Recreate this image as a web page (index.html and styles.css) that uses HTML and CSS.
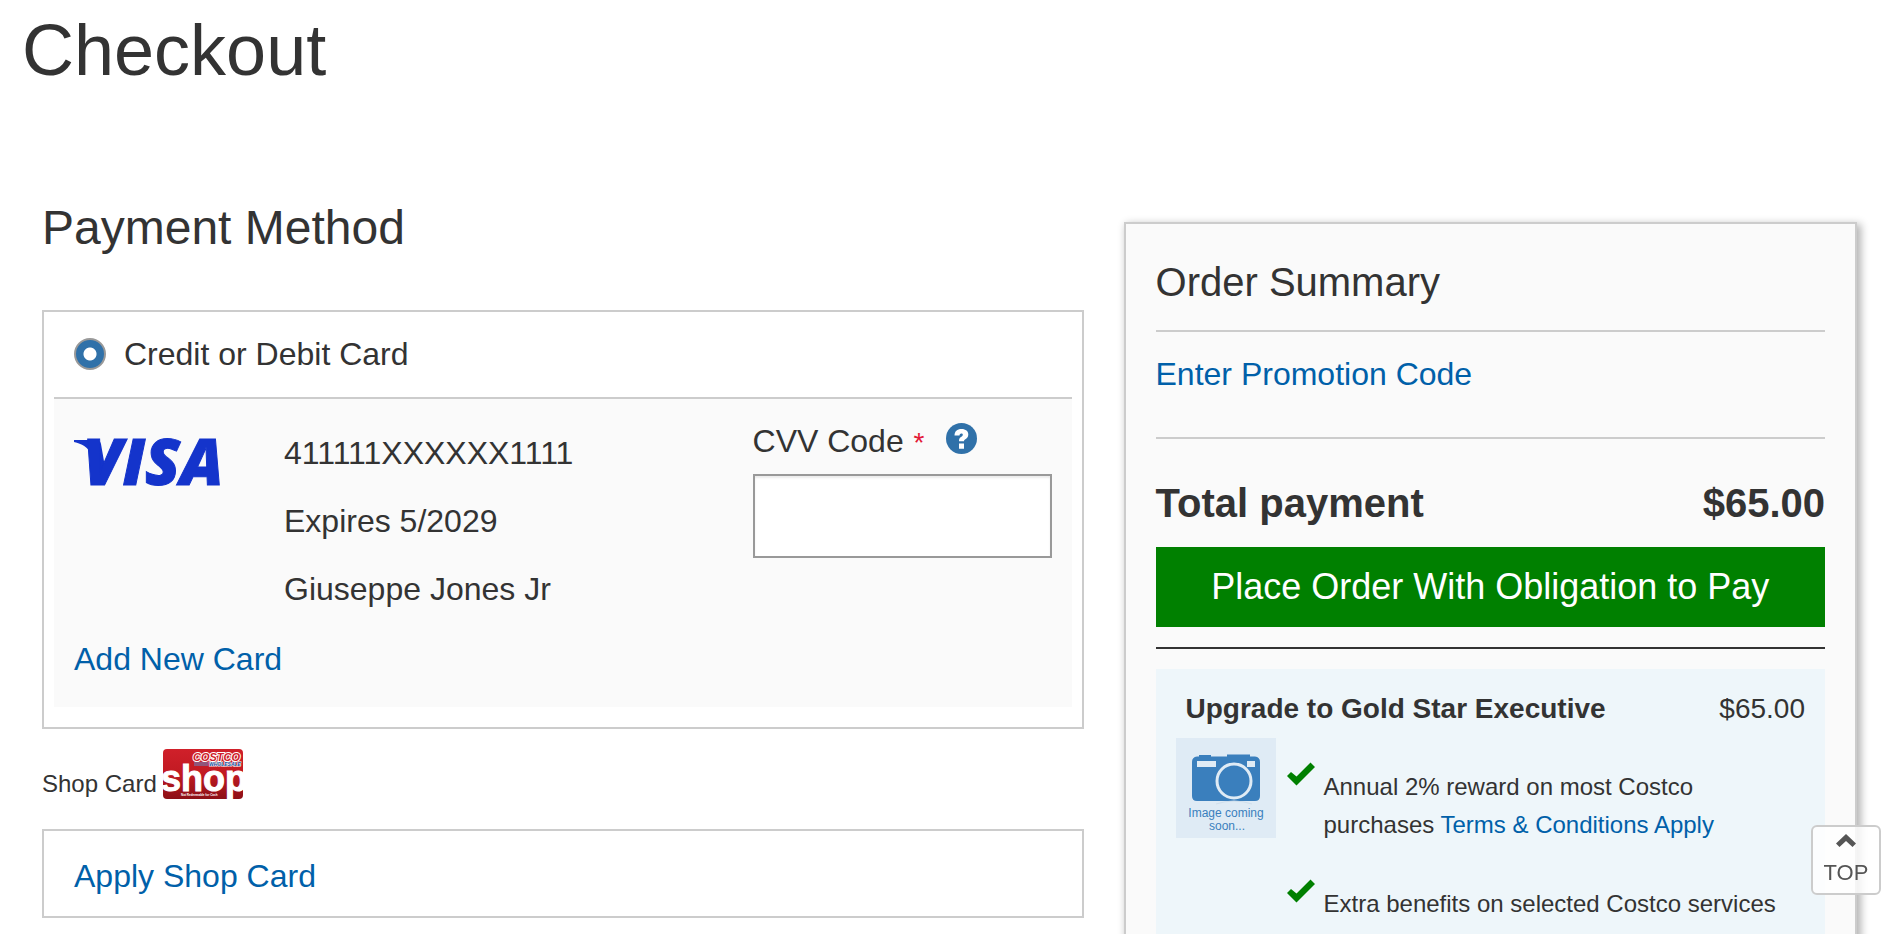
FILE: index.html
```html
<!DOCTYPE html>
<html lang="en">
<head>
    <meta charset="UTF-8">
    <meta name="viewport" content="width=device-width, initial-scale=1.0">
    <title>Checkout</title>
    <link rel="stylesheet" href="styles.css">
</head>
<body>
    <h1 class="page-title">Checkout</h1>

    <div class="checkout">
        <main class="payment">
            <h2 class="section-title">Payment Method</h2>

            <section class="box card-box">
                <div class="card-header">
                    <input type="radio" class="radio" id="payCard" name="payMethod" checked>
                    <label for="payCard">Credit or Debit Card</label>
                </div>
                <div class="card-body">
                    <div class="card-row">
                        <svg class="visa-logo" viewBox="0 0 146 48" role="img" aria-label="Visa">
                            <path d="M0 1H22Q26 1 27 5L31 28L23 42L16 14C14 8 8 5 0 3Z"/>
                            <text x="9" y="46">VISA</text>
                        </svg>
                        <div class="card-info">
                            <p>411111XXXXXX1111</p>
                            <p>Expires 5/2029</p>
                            <p>Giuseppe Jones Jr</p>
                        </div>
                        <div class="cvv">
                            <div class="cvv-label">
                                <label for="cvv">CVV Code <span class="required">*</span></label>
                                <button type="button" class="help-btn" aria-label="Help">
                                    <svg viewBox="0 0 31 31">
                                        <circle cx="15.5" cy="15.5" r="15.5"/>
                                        <path d="M8.5 12.5C8.7 8.3 11 6 15.5 6C19.8 6 22.3 8.3 22.3 11.5C22.3 14 20.8 15.3 19.4 16.2C18.2 17 18 17.3 18 18.3H13C12.9 16 13.6 14.8 15.4 13.7C16.4 13 16.8 12.6 16.8 11.8C16.8 10.9 16.3 10.4 15.4 10.4C14.2 10.4 13.6 11.1 13.5 12.5ZM13 20.5H18V25.8H13Z" fill="#fff"/>
                                    </svg>
                                </button>
                            </div>
                            <input type="text" class="cvv-input" id="cvv">
                        </div>
                    </div>
                    <a href="#" class="add-card">Add New Card</a>
                </div>
            </section>

            <div class="shop-card">
                <span>Shop Card</span>
                <svg class="shop-logo" viewBox="0 0 80 50" role="img" aria-label="Costco Shop Card">
                    <defs>
                        <linearGradient id="shopRed" x1="0" y1="0" x2="0" y2="1">
                            <stop offset="0" stop-color="#d0202a"/>
                            <stop offset="0.5" stop-color="#c11a22"/>
                            <stop offset="1" stop-color="#8c1016"/>
                        </linearGradient>
                        <clipPath id="shopClip"><rect width="80" height="50" rx="4"/></clipPath>
                    </defs>
                    <g clip-path="url(#shopClip)">
                        <rect width="80" height="50" fill="url(#shopRed)"/>
                        <text class="shop-brand" x="30" y="12">COSTCO</text>
                        <path d="M31 14H45M31 16H45" stroke="#5b8fd0" stroke-width="1"/>
                        <text class="shop-sub" x="46" y="17">WHOLESALE</text>
                        <text class="shop-word" x="-2" y="42">shop</text>
                        <text class="shop-note" x="18" y="47">Not Redeemable for Cash</text>
                    </g>
                </svg>
            </div>

            <section class="box apply-box">
                <a href="#">Apply Shop Card</a>
            </section>
        </main>

        <aside class="summary">
            <h2 class="summary-title">Order Summary</h2>
            <div class="promo">
                <a href="#">Enter Promotion Code</a>
            </div>
            <div class="total">
                <span>Total payment</span>
                <span>$65.00</span>
            </div>
            <button type="button" class="place-order">Place Order With Obligation to Pay</button>
            <hr class="divider">

            <section class="upgrade">
                <div class="upgrade-head">
                    <h3>Upgrade to Gold Star Executive</h3>
                    <span>$65.00</span>
                </div>
                <div class="upgrade-body">
                    <svg class="no-image" viewBox="0 0 100 100" role="img" aria-label="Image coming soon">
                        <rect width="100" height="100" fill="#dfebf5"/>
                        <path d="M23 17H35V18.500H51V16.500H74V18.500H79Q84 19 84 24V58Q84 63 79 63H21Q16 63 16 58V24Q16 19 21 18.500H23Z" fill="#3a7fbd"/>
                        <path d="M21 23H40V29H21ZM71 23H79V29H71Z" fill="#dfebf5"/>
                        <circle cx="58" cy="43" r="17" fill="#3a7fbd" stroke="#dfebf5" stroke-width="3"/>
                        <path d="M40 66Q58 60 76 66" fill="none" stroke="#d0dfec" stroke-width="1"/>
                        <text x="50" y="79">Image coming</text>
                        <text x="51" y="92">soon...</text>
                    </svg>
                    <ul class="benefits">
                        <li>
                            <svg class="check" viewBox="0 0 28 24"><path d="M4 10L0 14L9.500 23.500L28 5L23.500 0.500L9.500 14.500Z"/></svg>
                            <p>Annual 2% reward on most Costco purchases <a href="#">Terms &amp; Conditions Apply</a></p>
                        </li>
                        <li>
                            <svg class="check" viewBox="0 0 28 24"><path d="M4 10L0 14L9.500 23.500L28 5L23.500 0.500L9.500 14.500Z"/></svg>
                            <p>Extra benefits on selected Costco services</p>
                        </li>
                    </ul>
                </div>
            </section>
        </aside>
    </div>

    <button type="button" class="top-btn">
        <svg viewBox="0 0 20 14"><path d="M0 9.500L10 0L20 9.500L16.500 13L10 7L3.500 13Z"/></svg>
        TOP
    </button>
</body>
</html>
```
FILE: styles.css
```css
* {
    margin: 0;
    padding: 0;
    box-sizing: border-box;
}

body {
    font-family: Arial, "Liberation Sans", Helvetica, sans-serif;
    font-size: 32px;
    line-height: 40px;
    color: #333;
    background: #fff;
    padding-top: 10px;
}

a {
    color: #0060a9;
    text-decoration: none;
}

a:hover {
    text-decoration: underline;
}

h1,
h2,
h3 {
    font-weight: normal;
}

button,
input {
    font-family: inherit;
}

.page-title {
    font-size: 72px;
    line-height: 80px;
    padding: 0 22px;
}

.checkout {
    display: grid;
    grid-template-columns: minmax(0, 71fr) minmax(0, 50fr);
    align-items: start;
    gap: 40px;
    padding: 0 44px 0 42px;
    margin-top: 108px;
}

/* Payment column */
.section-title {
    font-size: 48px;
    line-height: 60px;
    margin-bottom: 52px;
}

.box {
    border: 2px solid #ccc;
}

.card-box {
    padding: 0 10px 20px;
}

.card-header {
    display: flex;
    align-items: center;
    gap: 18px;
    height: 87px;
    padding: 0 0 2px 20px;
    border-bottom: 2px solid #ccc;
}

.radio {
    appearance: none;
    width: 32px;
    height: 32px;
    border: 2px solid #999;
    border-radius: 50%;
    background: #fff;
}

.radio:checked {
    background: radial-gradient(circle, #fff 6px, #3071a9 7px);
}

.card-body {
    background: #fafafa;
    padding: 20px 20px 24px;
}

.card-row {
    display: grid;
    grid-template-columns: 210px 1fr 299px;
    margin-bottom: 12px;
}

.visa-logo {
    width: 146px;
    height: 48px;
    margin-top: 20px;
    fill: #1434cb;
    overflow: visible;
}

.visa-logo text {
    font-family: "Open Sans", sans-serif;
    font-size: 64px;
    font-weight: 800;
    font-style: italic;
    stroke: #1434cb;
    stroke-width: 1px;
}

.card-info {
    line-height: 68px;
}

.cvv-label {
    display: flex;
    align-items: center;
    gap: 20px;
    line-height: 44px;
    margin-bottom: 11px;
}

.required {
    color: #e31837;
    font-size: 28px;
    line-height: 32px;
    padding: 0 1px;
}

.help-btn {
    border: 0;
    background: none;
    height: 31px;
    margin-bottom: 6px;
    cursor: pointer;
}

.help-btn svg {
    display: block;
    width: 31px;
    height: 31px;
    fill: #3071a9;
}

.cvv-input {
    display: block;
    width: 100%;
    height: 84px;
    padding: 0 20px;
    font-size: 32px;
    border: 2px solid #999;
    background: #fff;
    box-shadow: inset 0 2px 2px rgba(0, 0, 0, 0.08);
}

.add-card {
    display: block;
    line-height: 48px;
}

.shop-card {
    display: flex;
    align-items: flex-end;
    gap: 6px;
    font-size: 24px;
    line-height: 30px;
    margin: 20px 0 30px;
}

.shop-logo {
    width: 80px;
    height: 50px;
}

.shop-logo text {
    font-weight: bold;
    fill: #fff;
}

.shop-logo .shop-brand {
    font-size: 11px;
    font-style: italic;
    fill: #d0202a;
    stroke: #fff;
    stroke-width: 2px;
    paint-order: stroke;
}

.shop-logo .shop-sub {
    font-size: 5px;
    font-style: italic;
    fill: #0a4a9c;
    stroke: #fff;
    stroke-width: 1px;
    paint-order: stroke;
}

.shop-logo .shop-word {
    font-size: 36px;
    stroke: #fff;
    stroke-width: 1px;
}

.shop-logo .shop-note {
    font-size: 3px;
}

.apply-box {
    padding: 25px 30px 20px;
}

/* Order summary */
.summary {
    margin-top: 24px;
    padding: 34px 30px;
    border: 2px solid #ccc;
    background: #fafafa;
    box-shadow: 3px 3px 8px 1px rgba(0, 0, 0, 0.3);
}

.summary-title {
    font-size: 40px;
    line-height: 48px;
    padding-bottom: 24px;
    border-bottom: 2px solid #ccc;
}

.promo {
    padding: 22px 0 43px;
    border-bottom: 2px solid #ccc;
}

.total {
    display: flex;
    justify-content: space-between;
    font-size: 40px;
    line-height: 48px;
    font-weight: bold;
    margin: 40px 0 20px;
}

.place-order {
    display: block;
    width: 100%;
    height: 80px;
    border: 0;
    background: #008000;
    color: #fff;
    font-size: 36px;
    cursor: pointer;
}

.divider {
    border: 0;
    border-top: 2px solid #333;
    margin: 20px 0;
}

.upgrade {
    background: #eef6fa;
    padding: 22px 20px 0;
}

.upgrade-head {
    display: flex;
    justify-content: space-between;
    font-size: 28px;
    line-height: 36px;
    padding-left: 10px;
    margin-bottom: 11px;
}

.upgrade-head h3 {
    font-size: 28px;
    font-weight: bold;
}

.upgrade-body {
    display: flex;
    gap: 11px;
}

.no-image {
    flex: none;
    width: 100px;
    height: 100px;
}

.no-image text {
    font-size: 12px;
    fill: #3a7fbd;
    text-anchor: middle;
}

.benefits {
    list-style: none;
    padding-top: 24px;
    font-size: 24px;
    line-height: 38px;
}

.benefits li {
    display: flex;
    gap: 9px;
    margin-bottom: 35px;
}

.benefits p {
    padding-top: 6px;
}

.check {
    flex: none;
    width: 28px;
    height: 24px;
    fill: #008000;
}

/* Back to top */
.top-btn {
    position: fixed;
    right: 20px;
    bottom: 39px;
    width: 70px;
    height: 70px;
    display: flex;
    flex-direction: column;
    align-items: center;
    gap: 12px;
    padding-top: 7px;
    border: 2px solid #ccc;
    border-radius: 6px;
    background: rgba(255, 255, 255, 0.8);
    color: #555;
    font-size: 22px;
    cursor: pointer;
}

.top-btn svg {
    flex: none;
    width: 20px;
    height: 14px;
    fill: #555;
}
```
